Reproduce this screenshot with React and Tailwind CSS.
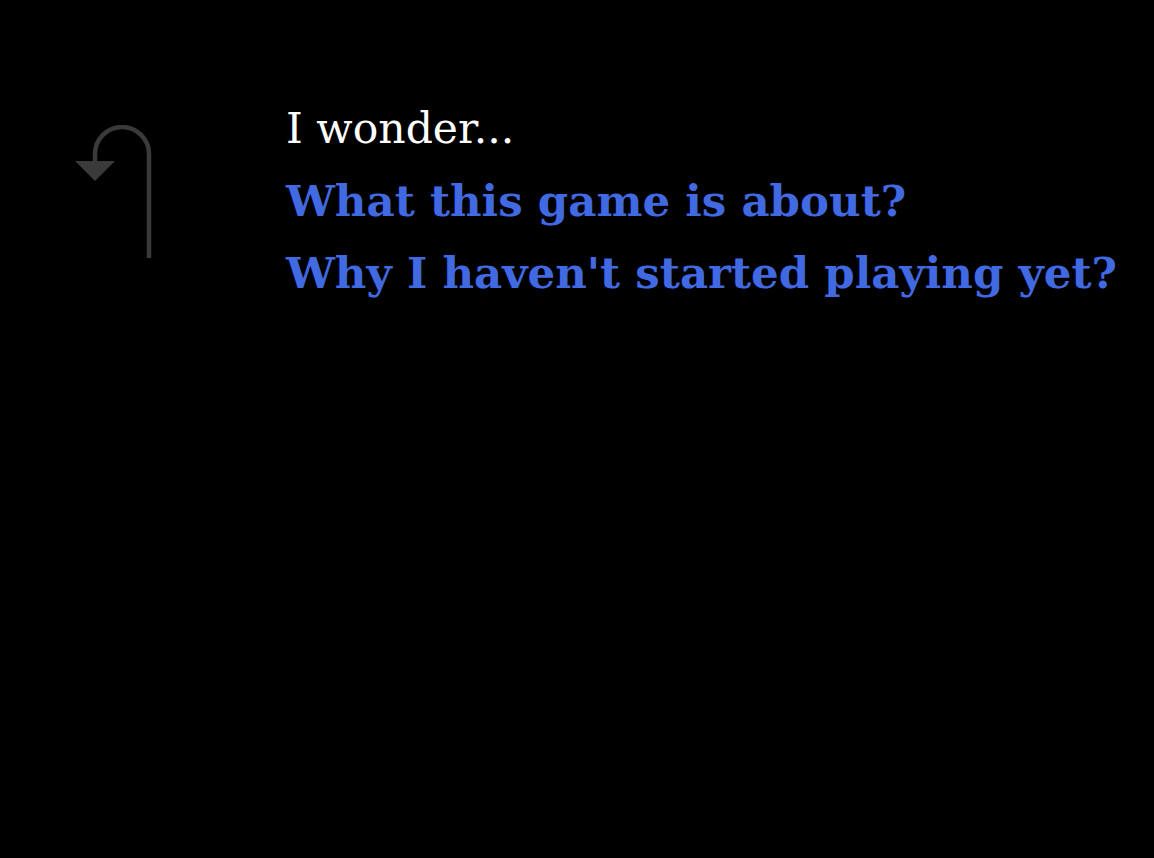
export default function App() {
  return (
    <div className="min-h-screen w-full bg-black flex items-start pt-[93px]" style={{ fontFamily: 'Georgia, "DejaVu Serif", serif' }}>
      {/* back arrow */}
      <div className="ml-[75px] mt-[32px] w-[80px] shrink-0">
        <svg width="80" height="135" viewBox="0 0 80 135" fill="none">
          <path d="M74 133 V29 A27 27 0 0 0 20 29 V37" stroke="#3a3a3a" strokeWidth="4.5" />
          <path d="M0 36 H40 L20 56 Z" fill="#3a3a3a" />
        </svg>
      </div>

      <div className="ml-[131px] flex flex-col leading-[72px]">
        <p className="text-white text-[42.5px]">I wonder...</p>
        <a className="text-[#4169e1] text-[43.5px] font-bold cursor-pointer">What this game is about?</a>
        <a className="text-[#4169e1] text-[43.5px] font-bold cursor-pointer">Why I haven't started playing yet?</a>
      </div>
    </div>
  )
}
